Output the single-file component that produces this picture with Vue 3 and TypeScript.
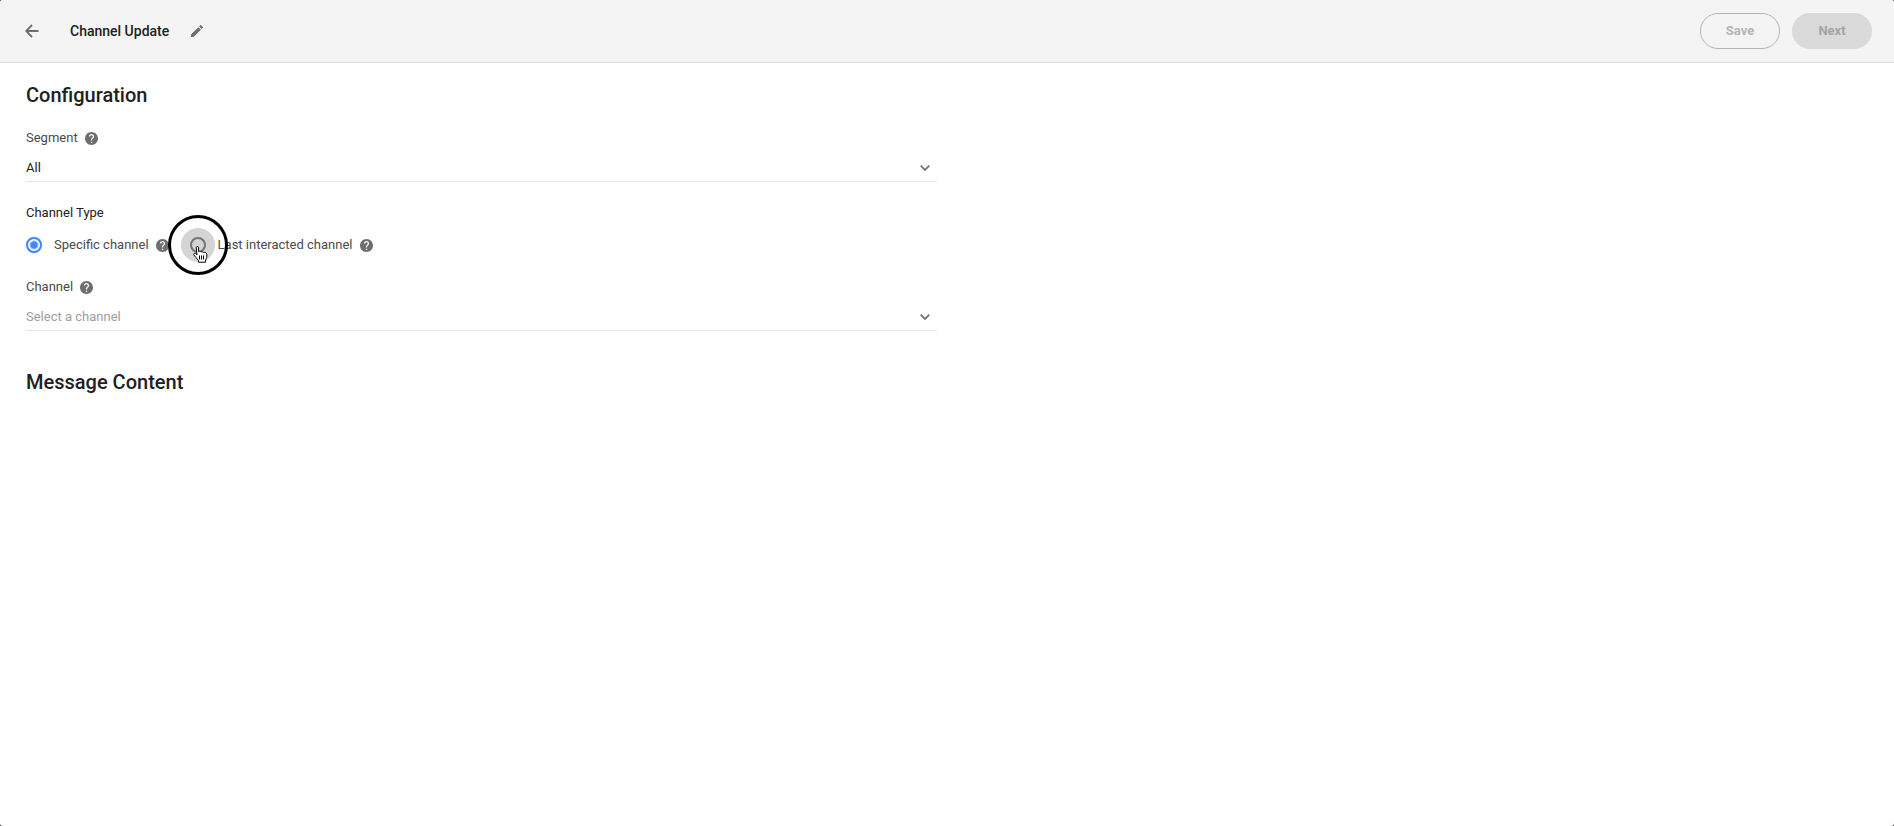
<script setup lang="ts">
import { ref } from 'vue'

const title = ref('Channel Update')
const segment = ref('all')
const channelType = ref('specific')
const channel = ref('')

const helpPath =
  'M12 2C6.48 2 2 6.48 2 12s4.48 10 10 10 10-4.48 10-10S17.52 2 12 2zm1 17h-2v-2h2v2zm2.07-7.75l-.9.92C13.45 12.9 13 13.5 13 15h-2v-.5c0-1.1.45-2.1 1.17-2.83l1.24-1.26c.37-.36.59-.86.59-1.41 0-1.1-.9-2-2-2s-2 .9-2 2H8c0-2.21 1.79-4 4-4s4 1.79 4 4c0 .88-.36 1.68-.93 2.25z'

const channelTypes = [
  { value: 'specific', label: 'Specific channel' },
  { value: 'last', label: 'Last interacted channel' },
]
</script>

<template>
  <div class="page">
    <header class="topbar">
      <button class="icon-button" type="button" aria-label="Back">
        <svg class="back-icon" viewBox="0 0 14 14">
          <path d="M13.5 7H1.5M7 1L1.2 7L7 13" fill="none" stroke="currentColor" stroke-width="1.8" />
        </svg>
      </button>
      <h1 class="title">{{ title }}</h1>
      <button class="icon-button" type="button" aria-label="Rename">
        <svg class="edit-icon" viewBox="0 0 24 24">
          <path
            fill="currentColor"
            d="M3 17.25V21h3.75L17.81 9.94l-3.75-3.75L3 17.25zM20.71 7.04a1 1 0 0 0 0-1.41l-2.34-2.34a1 1 0 0 0-1.41 0l-1.83 1.83 3.75 3.75 1.83-1.83z"
          />
        </svg>
      </button>
      <div class="actions">
        <button class="pill outlined" type="button" disabled>Save</button>
        <button class="pill filled" type="button" disabled>Next</button>
      </div>
    </header>

    <main class="content">
      <div class="column">
        <h2 class="heading">Configuration</h2>

        <div class="field">
          <div class="label-row">
            <label for="segment">Segment</label>
            <svg class="help" viewBox="2 2 20 20"><path :d="helpPath" /></svg>
          </div>
          <div class="select-box">
            <select id="segment" v-model="segment">
              <option value="all">All</option>
            </select>
            <svg class="chevron" viewBox="0 0 10 6">
              <path d="M0.7 0.7L5 5L9.3 0.7" />
            </svg>
          </div>
        </div>

        <fieldset class="types">
          <legend>Channel Type</legend>
          <div class="options">
            <div v-for="t in channelTypes" :key="t.value" class="option">
              <span class="radio-wrap">
                <span v-if="t.value === 'last'" class="ripple"></span>
                <input :id="t.value" v-model="channelType" type="radio" name="channel-type" :value="t.value" />
                <span v-if="t.value === 'last'" class="ring"></span>
                <svg v-if="t.value === 'last'" class="pointer" viewBox="0 0 15 17">
                  <path
                    d="M3.2 1.6C3.2 .2 5.6 .2 5.6 1.6V5.6C6.2 5 7.6 5.1 8 6C8.8 5.4 10 5.7 10.4 6.6C11.5 6 13.4 6.4 13.8 8.2C14.1 10.8 13.4 12.5 12.6 14V16.2H5.4V14.4C4.2 12.8 2.3 10.7 .8 8.9C.2 7.8 1.6 6.8 2.7 7.7L4 8.9Z"
                    fill="#fff"
                    stroke="#000"
                    stroke-linejoin="round"
                  />
                  <path d="M6.5 9.5v4M8.5 9.5v4M10.5 9.5v4" stroke="#000" fill="none" />
                </svg>
              </span>
              <label :for="t.value">{{ t.label }}</label>
              <svg class="help" viewBox="2 2 20 20"><path :d="helpPath" /></svg>
            </div>
          </div>
        </fieldset>

        <div class="field">
          <div class="label-row">
            <label for="channel">Channel</label>
            <svg class="help" viewBox="2 2 20 20"><path :d="helpPath" /></svg>
          </div>
          <div class="select-box">
            <select id="channel" v-model="channel" :class="{ empty: !channel }">
              <option value="" disabled>Select a channel</option>
            </select>
            <svg class="chevron" viewBox="0 0 10 6">
              <path d="M0.7 0.7L5 5L9.3 0.7" />
            </svg>
          </div>
        </div>

        <h2 class="heading message">Message Content</h2>
      </div>
    </main>
  </div>
</template>

<style>
html {
  background: #555;
}
</style>

<style scoped>
.page {
  min-height: 100vh;
  background: #fff;
  border-radius: 3px;
  overflow: hidden;
  font-family: Roboto, "Liberation Sans", sans-serif;
  font-size: 13px;
  line-height: 16px;
  color: #212121;
}
.topbar {
  box-sizing: border-box;
  height: 63px;
  display: flex;
  align-items: center;
  padding: 0 22px 0 20px;
  background: #f4f4f4;
  border-bottom: 1px solid #dedede;
}
.icon-button {
  display: flex;
  align-items: center;
  justify-content: center;
  width: 24px;
  height: 24px;
  padding: 0;
  border: 0;
  background: none;
  color: #6e6e6e;
}
.back-icon {
  width: 14px;
  height: 14px;
}
.edit-icon {
  width: 16px;
  height: 16px;
}
.title {
  margin: 0 16px 0 26px;
  font-size: 14px;
  line-height: 20px;
  font-weight: 500;
}
.actions {
  display: flex;
  gap: 12px;
  margin-left: auto;
}
.pill {
  box-sizing: border-box;
  width: 80px;
  height: 36px;
  padding: 0;
  border-radius: 18px;
  font: 700 13px/16px Roboto, "Liberation Sans", sans-serif;
}
.outlined {
  border: 1px solid #b4b4b4;
  background: transparent;
  color: #b4b4b4;
}
.filled {
  border: 0;
  background: #dadada;
  color: #a4a4a4;
}
.content {
  display: grid;
  grid-template-columns: 1fr 1fr;
  gap: 20px;
  padding: 20px 26px;
}
.heading {
  margin: 0;
  font-size: 20px;
  line-height: 24px;
  font-weight: 500;
}
.field {
  margin-top: 23px;
}
.label-row {
  display: flex;
  align-items: center;
  gap: 7px;
  color: #4a4a4a;
}
.help {
  width: 13px;
  height: 13px;
  fill: #6e6e6e;
}
.select-box {
  display: flex;
  align-items: center;
  box-sizing: border-box;
  height: 36px;
  padding-top: 9px;
  border-bottom: 1px solid #e6e6e6;
}
.select-box select {
  flex: 1;
  height: 24px;
  margin-right: -16px;
  padding: 0 16px 0 0;
  border: 0;
  background: none;
  appearance: none;
  font: inherit;
  color: #212121;
}
.select-box select.empty {
  color: #9e9e9e;
}
.chevron {
  width: 10px;
  height: 6px;
  margin-right: 7px;
  fill: none;
  stroke: #757575;
  stroke-width: 1.8;
  pointer-events: none;
}
.types {
  margin: 23px 0 26px;
  padding: 0;
  border: 0;
}
.types legend {
  padding: 0;
}
.options {
  display: flex;
  gap: 21px;
  margin-top: 16px;
}
.option {
  display: flex;
  align-items: center;
  color: #4a4a4a;
}
.option .help {
  margin-left: 7px;
}
.radio-wrap {
  position: relative;
  display: flex;
  margin-right: 12px;
}
.radio-wrap input {
  position: relative;
  box-sizing: border-box;
  appearance: none;
  width: 16px;
  height: 16px;
  margin: 0;
  border: 2px solid #757575;
  border-radius: 50%;
}
.radio-wrap input:checked {
  border-color: #4285f4;
  background: radial-gradient(circle closest-side, #4285f4 3px, #fff 5px);
  box-shadow: 0 0 0 1px #e3edfd;
}
.ripple {
  position: absolute;
  inset: -9px;
  border-radius: 50%;
  background: #d4d4d4;
}
.ring {
  position: absolute;
  z-index: 1;
  inset: -22px;
  border: 3px solid #000;
  border-radius: 50%;
  pointer-events: none;
}
.pointer {
  position: absolute;
  top: 9px;
  left: 3px;
  width: 15px;
  height: 17px;
  pointer-events: none;
}
.message {
  margin-top: 39px;
}
</style>
